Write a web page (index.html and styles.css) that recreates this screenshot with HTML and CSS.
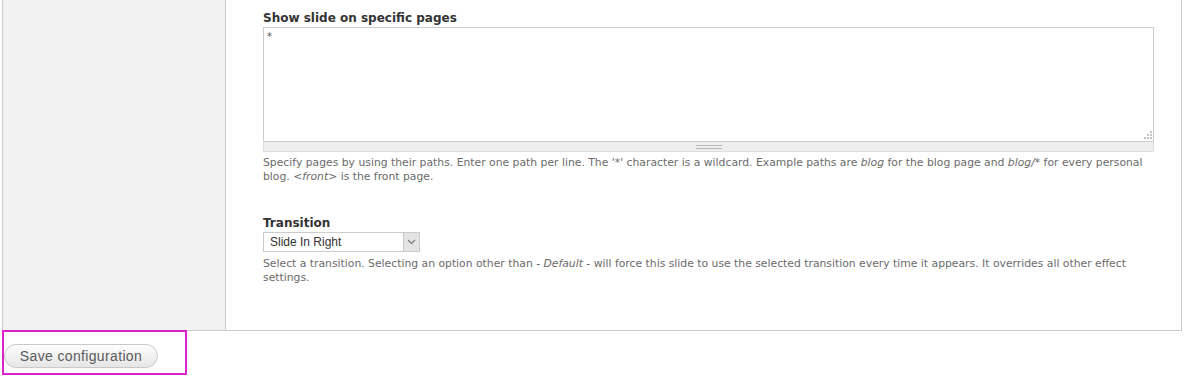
FILE: index.html
```html
<!DOCTYPE html>
<html lang="en">
<head>
    <meta charset="UTF-8">
    <title>Slide settings</title>
    <link rel="stylesheet" href="styles.css">
</head>
<body>
    <div class="vertical-tabs">
        <div class="tabs-list"></div>
        <div class="tabs-panes">
            <div class="form-item">
                <label class="form-label">Show slide on specific pages</label>
                <div class="textarea-wrap">
                    <textarea class="form-textarea">*</textarea>
                    <svg class="resize-grip" width="8" height="8" viewBox="0 0 8 8">
                        <rect x="6" y="0" width="2" height="2" fill="#c4c4c4"/>
                        <rect x="3" y="3" width="2" height="2" fill="#c4c4c4"/>
                        <rect x="6" y="3" width="2" height="2" fill="#c4c4c4"/>
                        <rect x="0" y="6" width="2" height="2" fill="#c4c4c4"/>
                        <rect x="3" y="6" width="2" height="2" fill="#c4c4c4"/>
                        <rect x="6" y="6" width="2" height="2" fill="#c4c4c4"/>
                    </svg>
                    <div class="grippie"><span></span></div>
                </div>
                <div class="description">Specify pages by using their paths. Enter one path per line. The '*' character is a wildcard. Example paths are <em>blog</em> for the blog page and <em>blog/*</em> for every personal<br>blog. <em>&lt;front&gt;</em> is the front page.</div>
            </div>
            <div class="form-item form-item-select">
                <label class="form-label">Transition</label>
                <div class="select">
                    <span class="select-value">Slide In Right</span>
                    <span class="select-arrow">
                        <svg width="9" height="6" viewBox="0 0 9 6"><path d="M1 1 L4.5 4.5 L8 1" fill="none" stroke="#777" stroke-width="1.2"/></svg>
                    </span>
                </div>
                <div class="description">Select a transition. Selecting an option other than <em>- Default -</em> will force this slide to use the selected transition every time it appears. It overrides all other effect<br>settings.</div>
            </div>
        </div>
    </div>
    <div class="form-actions">
        <button class="form-submit">Save configuration</button>
    </div>
</body>
</html>
```

FILE: styles.css
```css
body {
    margin: 0;
    background-color: #fff;
    font-family: "DejaVu Sans", Verdana, sans-serif;
    color: #333;
}
.vertical-tabs {
    display: flex;
    margin-left: 2px;
    width: 1178px;
    height: 330px;
    border: 1px solid #ccc;
    border-top: none;
}
.tabs-list {
    width: 222px;
    background-color: #f2f2f2;
    border-right: 1px solid #ccc;
}
.tabs-panes {
    flex: 1;
    padding: 10px 27px 0 37px;
}
.form-label {
    display: block;
    font-size: 12px;
    font-weight: bold;
    color: #333;
    line-height: 16px;
    height: 17px;
}
.textarea-wrap {
    position: relative;
}
.form-textarea {
    display: block;
    box-sizing: border-box;
    width: 100%;
    height: 114px;
    margin: 0;
    padding: 3px;
    border: 1px solid #ccc;
    border-bottom: none;
    font-family: "DejaVu Sans", sans-serif;
    font-size: 10px;
    color: #555;
    resize: none;
    outline: none;
}
.resize-grip {
    position: absolute;
    right: 2px;
    top: 104px;
}
.grippie {
    display: flex;
    justify-content: center;
    align-items: center;
    height: 9px;
    background-color: #eee;
    border: 1px solid #ddd;
    border-top-color: #ccc;
}
.grippie span {
    width: 26px;
    height: 2px;
    border-top: 1px solid #bbb;
    border-bottom: 1px solid #bbb;
}
.description {
    font-size: 10.8px;
    line-height: 14px;
    color: #6b6b6b;
    margin-top: 4px;
}
.form-item-select {
    margin-top: 31px;
}
.select {
    display: flex;
    align-items: center;
    box-sizing: border-box;
    width: 157px;
    height: 20px;
    border: 1px solid #ccc;
    background-color: #fff;
}
.select-value {
    flex: 1;
    padding-left: 6px;
    font-family: "Liberation Sans", Arial, sans-serif;
    font-size: 12px;
    color: #333;
}
.select-arrow {
    display: flex;
    align-items: center;
    justify-content: center;
    width: 15px;
    height: 100%;
    background-color: #e4e4e4;
    border-left: 1px solid #c8c8c8;
}
.form-item-select .description {
    margin-top: 5px;
}
.form-actions {
    margin-left: 2px;
    margin-top: -1px;
    width: 181px;
    border: 2px solid #dc22cc;
    padding-top: 12px;
    height: 29px;
}
.form-submit {
    display: block;
    width: 154px;
    height: 24px;
    margin: 0;
    border: 1px solid #c9c9c9;
    border-radius: 12px;
    background: linear-gradient(#fdfdfd, #e6e6e6);
    font-family: "Liberation Sans", Arial, sans-serif;
    font-size: 14px;
    letter-spacing: 0.35px;
    color: #5a5a5a;
    padding: 0 0 1px;
}
```
